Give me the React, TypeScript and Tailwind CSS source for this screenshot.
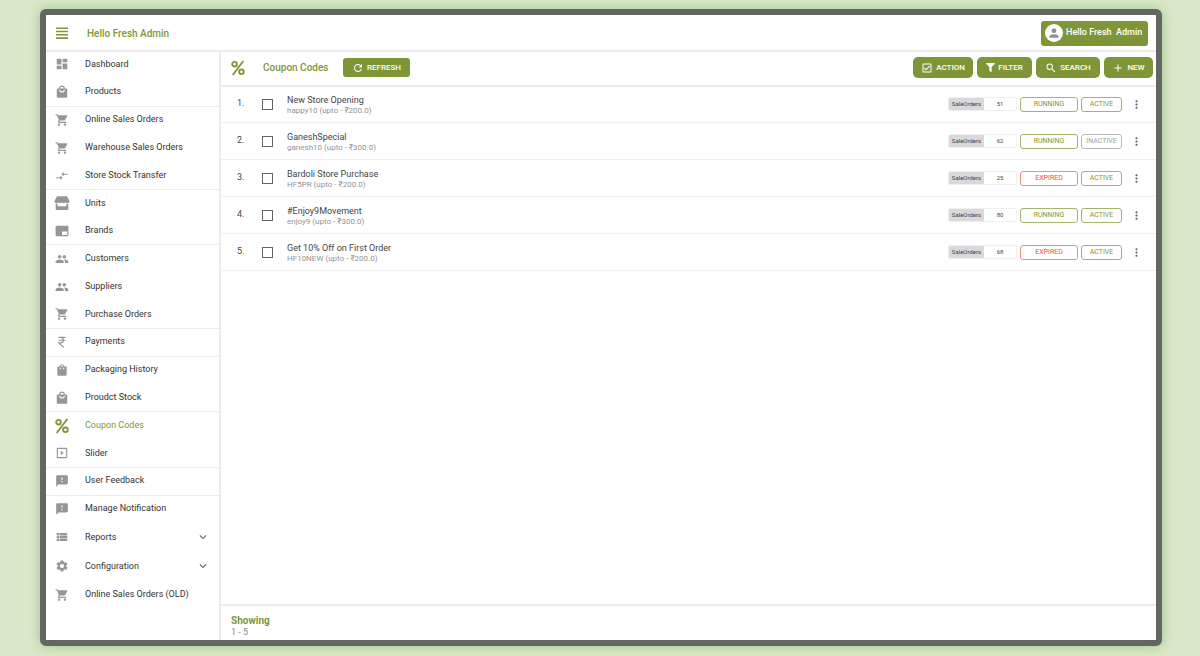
import React from "react";
import clsx from "clsx";
import type { IconType } from "react-icons";
import { FaFilter } from "react-icons/fa";
import {
    MdAdd,
    MdBrandingWatermark,
    MdCompareArrows,
    MdDashboard,
    MdExpandMore,
    MdFeedback,
    MdLocalMall,
    MdMoreVert,
    MdOutlineCheckBox,
    MdOutlineSlideshow,
    MdPeople,
    MdPerson,
    MdRefresh,
    MdSearch,
    MdSettings,
    MdShoppingBag,
    MdShoppingCart,
    MdViewList,
} from "react-icons/md";

type IconProps = { className?: string };

const PercentIcon = ({ className }: IconProps) => (
    <svg viewBox="0 0 24 24" fill="none" stroke="currentColor" strokeWidth="2.8" className={className} aria-hidden="true">
        <circle cx="6.8" cy="6.3" r="3.5" />
        <circle cx="17.2" cy="17.7" r="3.5" />
        <path d="M20 1.500 4 22.500" />
    </svg>
);

const MenuIcon = ({ className }: IconProps) => (
    <svg viewBox="0 0 12 12" fill="currentColor" className={className} aria-hidden="true">
        <path d="M0 .4h12v1.600H0zM0 3.700h12v1.600H0zM0 7h12v1.600H0zM0 10.300h12v1.600H0z" />
    </svg>
);

const StoreIcon = ({ className }: IconProps) => (
    <svg viewBox="0 0 24 24" fill="currentColor" className={className} aria-hidden="true">
        <path d="M4.500 2h15L23 8.500c.5 2-.6 3.800-2.600 3.800-1.500 0-2.400-.8-2.800-1.600-.6 1-1.600 1.600-2.800 1.600s-2.200-.6-2.800-1.600c-.6 1-1.600 1.600-2.800 1.600s-2.200-.6-2.800-1.600c-.4.8-1.300 1.600-2.800 1.600C1.600 12.300.5 10.500 1 8.500z" />
        <path d="M2.500 13.500h3V17h13v-3.500h3V21c0 .8-.6 1.500-1.500 1.500H4c-.9 0-1.500-.7-1.500-1.500z" />
    </svg>
);

const RupeeIcon = ({ className }: IconProps) => (
    <svg viewBox="0 0 24 24" fill="none" stroke="currentColor" strokeWidth="2" className={className} aria-hidden="true">
        <path d="M6 4h12M6 9h12M6 4h3.500c6.500 0 6.500 9.500 0 9.500H6.500L15 21.500" />
    </svg>
);

interface NavItem {
    label: string;
    icon: IconType | React.FC<IconProps>;
    divider?: boolean;
    active?: boolean;
    expandable?: boolean;
    large?: boolean;
}

const navItems: NavItem[] = [
    { label: "Dashboard", icon: MdDashboard },
    { label: "Products", icon: MdLocalMall, divider: true },
    { label: "Online Sales Orders", icon: MdShoppingCart },
    { label: "Warehouse Sales Orders", icon: MdShoppingCart },
    { label: "Store Stock Transfer", icon: MdCompareArrows, divider: true },
    { label: "Units", icon: StoreIcon, large: true },
    { label: "Brands", icon: MdBrandingWatermark, divider: true },
    { label: "Customers", icon: MdPeople },
    { label: "Suppliers", icon: MdPeople },
    { label: "Purchase Orders", icon: MdShoppingCart, divider: true },
    { label: "Payments", icon: RupeeIcon, divider: true },
    { label: "Packaging History", icon: MdShoppingBag },
    { label: "Proudct Stock", icon: MdLocalMall, divider: true },
    { label: "Coupon Codes", icon: PercentIcon, active: true },
    { label: "Slider", icon: MdOutlineSlideshow, divider: true },
    { label: "User Feedback", icon: MdFeedback, divider: true },
    { label: "Manage Notification", icon: MdFeedback },
    { label: "Reports", icon: MdViewList, expandable: true },
    { label: "Configuration", icon: MdSettings, expandable: true },
    { label: "Online Sales Orders (OLD)", icon: MdShoppingCart },
];

interface Coupon {
    name: string;
    code: string;
    upto: string;
    orders: number;
    expired?: boolean;
    inactive?: boolean;
}

const coupons: Coupon[] = [
    { name: "New Store Opening", code: "happy10", upto: "200.0", orders: 51 },
    { name: "GaneshSpecial", code: "ganesh10", upto: "300.0", orders: 62, inactive: true },
    { name: "Bardoli Store Purchase", code: "HF5PR", upto: "200.0", orders: 25, expired: true },
    { name: "#Enjoy9Movement", code: "enjoy9", upto: "300.0", orders: 80 },
    { name: "Get 10% Off on First Order", code: "HF10NEW", upto: "200.0", orders: 68, expired: true },
];

const Header = () => (
    <header className="relative z-10 flex h-[35px] shrink-0 items-center bg-white pt-px pr-2 pl-[10px] shadow-[0_2px_0_#ebebeb]">
        <button type="button" aria-label="Toggle menu" className="text-[#7f9638]">
            <MenuIcon className="size-3" />
        </button>
        <h1 className="ml-[19px] text-[10px] font-medium text-[#7f9638]">Hello Fresh Admin</h1>
        <button type="button" className="ml-auto flex h-[25px] w-[107px] items-center gap-[3px] rounded-[3px] bg-[#7f9638] px-1 text-[9px] font-medium text-white">
            <span className="flex size-[18px] items-center justify-center rounded-full bg-white text-[#8b919c]">
                <MdPerson className="size-[14px]" />
            </span>
            <span className="whitespace-pre">Hello Fresh  Admin</span>
        </button>
    </header>
);

const Sidebar = () => (
    <nav className="flex w-[175px] shrink-0 flex-col border-r-2 border-[#ebebeb] pt-px pb-[31px]">
        {navItems.map(({ label, icon: Icon, divider, active, expandable, large }) => (
            <a
                key={label}
                href="#"
                className={clsx(
                    "flex items-center border-b pr-[9px] pl-2 text-[9px]",
                    expandable ? "h-[29px]" : "min-h-6 flex-1",
                    divider ? "border-[#ebebeb]" : "border-transparent",
                    active ? "text-[#7f9638]" : "text-[#333]"
                )}
            >
                <span className={clsx("flex w-4 justify-center", active ? "text-[#7f9638]" : "text-[#969696]")}>
                    <Icon className={clsx("shrink-0", active || large ? "size-4" : "size-[14px]")} />
                </span>
                <span className="ml-[15px] flex-1">{label}</span>
                {expandable && <MdExpandMore className="size-[14px] text-[#666]" />}
            </a>
        ))}
    </nav>
);

interface ToolbarButtonProps {
    icon: IconType;
    label: string;
    className: string;
    iconClassName?: string;
}

const ToolbarButton = ({ icon: Icon, label, className, iconClassName = "size-3" }: ToolbarButtonProps) => (
    <button
        type="button"
        className={clsx("flex items-center justify-center gap-[3px] bg-[#7f9638] text-[8px] font-medium text-white", className)}
    >
        <Icon className={iconClassName} />
        {label}
    </button>
);

const Toolbar = () => (
    <div className="flex h-[35px] shrink-0 items-center pr-[3px] pl-[9px] shadow-[0_2px_0_#ebebeb]">
        <PercentIcon className="size-4 text-[#7f9638]" />
        <h2 className="ml-[17px] w-17 text-[10px] font-medium text-[#7f9638]">Coupon Codes</h2>
        <ToolbarButton icon={MdRefresh} label="REFRESH" className="ml-3 h-[19px] w-[67px] rounded-[3px]" />
        <div className="ml-auto flex gap-1">
            <ToolbarButton icon={MdOutlineCheckBox} label="ACTION" className="h-[21px] w-[60px] rounded-[5px]" />
            <ToolbarButton icon={FaFilter} label="FILTER" className="h-[21px] w-[55px] rounded-[5px]" iconClassName="size-[9px]" />
            <ToolbarButton icon={MdSearch} label="SEARCH" className="h-[21px] w-16 rounded-[5px]" />
            <ToolbarButton icon={MdAdd} label="NEW" className="h-[21px] w-[49px] rounded-[5px]" />
        </div>
    </div>
);

const CouponRow = ({ coupon, index }: { coupon: Coupon; index: number }) => (
    <li className="flex h-[37px] items-center border-b border-[#f0f0f0] pr-[13px] pl-4 text-[#444]">
        <span className="w-[25px] text-[9px]">{index + 1}.</span>
        <input
            type="checkbox"
            aria-label={"Select " + coupon.name}
            className="size-[11px] appearance-none border border-[#666] bg-white checked:bg-[#7f9638]"
        />
        <div className="ml-[14px] flex-1 pt-[2px]">
            <p className="text-[9px] leading-[11px]">{coupon.name}</p>
            <p className="text-[8px] leading-[9px] text-[#949494]">
                {coupon.code} (upto - ₹{coupon.upto})
            </p>
        </div>
        <div className="flex h-[14px] w-[69px] overflow-hidden rounded-[2px] border border-[#f0f0f0] text-[6px] leading-3">
            <span className="w-[35px] bg-[#d9d9d9] text-center">SaleOrders</span>
            <span className="flex-1 text-center">{coupon.orders}</span>
        </div>
        <button
            type="button"
            className={clsx(
                "ml-[3px] h-[15px] w-[58px] rounded-[3px] border text-[7px]",
                coupon.expired ? "border-[#f58b86] text-[#ee4a43]" : "border-[#a3b46f] text-[#7f9638]"
            )}
        >
            {coupon.expired ? "EXPIRED" : "RUNNING"}
        </button>
        <button
            type="button"
            className={clsx(
                "ml-[3px] h-[15px] w-[41px] rounded-[3px] border text-[7px]",
                coupon.inactive ? "border-[#b8b8b8] text-[#a0a0a0]" : "border-[#a3b46f] text-[#7f9638]"
            )}
        >
            {coupon.inactive ? "INACTIVE" : "ACTIVE"}
        </button>
        <button type="button" aria-label="More options" className="ml-2 text-[#666]">
            <MdMoreVert className="size-[13px]" />
        </button>
    </li>
);

const App: React.FC = () => {
    return (
        <div className="flex min-h-screen flex-col bg-[#d9e8c9] pt-[9px] pr-[38px] pb-[10px] pl-10 font-['Roboto',sans-serif]">
            <div className="flex flex-1 flex-col overflow-hidden rounded-[6px] border-[6px] border-[#646664] bg-white shadow-[0_0_12px_#9fc48c]">
                <Header />
                <div className="flex flex-1">
                    <Sidebar />
                    <main className="flex min-w-0 flex-1 flex-col">
                        <Toolbar />
                        <ol className="flex-1 pt-px">
                            {coupons.map((coupon, index) => (
                                <CouponRow key={coupon.name} coupon={coupon} index={index} />
                            ))}
                        </ol>
                        <footer className="h-9 border-t-2 border-[#ebebeb] pt-[9px] pl-[10px]">
                            <p className="text-[10px] leading-3 font-bold text-[#7f9638]">Showing</p>
                            <p className="text-[9px] leading-[10px] text-[#888]">1 - 5</p>
                        </footer>
                    </main>
                </div>
            </div>
        </div>
    );
};

export default App;
